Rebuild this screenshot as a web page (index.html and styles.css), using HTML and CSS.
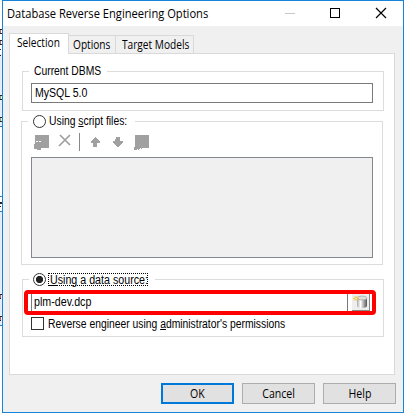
FILE: index.html
```html
<!DOCTYPE html>
<html lang="en">
<head>
<meta charset="utf-8">
<title>Database Reverse Engineering Options</title>
<link rel="stylesheet" href="styles.css">
</head>
<body>
<div class="desktop">
<svg class="behind" width="2" height="415" shape-rendering="crispEdges"><path d="M0 54h2v72H0zM0 211h2v114H0z" fill="#e3eefa"/><path d="M0 126h2v1H0zM0 196h2v1H0zM0 211h2v1H0zM0 325h2v1H0z" fill="#1883d7"/><path d="M0 29h2v1H0zM0 33h2v1H0zM0 40h2v1H0zM0 44h2v1H0zM0 49h1v1H0zM0 55h1v1H0zM0 95h2v1H0zM0 99h2v1H0zM0 117h2v1H0zM0 121h2v1H0zM0 202h2v2H0zM0 206h1v1H0zM0 294h2v1H0zM0 298h1v1H0zM0 316h2v1H0zM0 320h1v1H0z" fill="#223"/><path d="M0 30h1v3H0zM0 41h1v3H0zM0 295h1v3H0zM0 317h1v3H0z" fill="#b96a5a"/><path d="M0 96h1v3H0zM0 118h1v3H0z" fill="#7cae62"/></svg>
<main class="window">
  <header class="titlebar">
    <h1>Database Reverse Engineering Options</h1>
    <svg class="controls" width="104" height="12" shape-rendering="crispEdges"><path d="M0 6.500h10" stroke="#c8c8c8"/><path d="M45.500 1.500h9v9h-9z" fill="none" stroke="#000"/><path d="M91 1l10 10M101 1L91 11" stroke="#000" shape-rendering="auto" stroke-width="1.200"/></svg>
  </header>
  <nav class="tabs">
    <span class="tab active"><b class="t-sel">Selection</b></span>
    <span class="tab opt"><b class="t-opt">Options</b></span>
    <span class="tab target"><b class="t-tar">Target Models</b></span>
  </nav>
  <section class="panel">
    <fieldset class="group dbms">
      <div class="legend"><b class="t-cur">Current DBMS</b></div>
      <div class="field"><b class="t-my">MySQL 5.0</b></div>
    </fieldset>
    <fieldset class="group scripts">
      <div class="legend"><span class="radio"></span><b class="t-usf">Using <u>s</u>cript files:</b></div>
      <div class="toolbar">
        <svg width="118" height="18" fill="#a0a0a0" shape-rendering="crispEdges"><path d="M1 2h14v13H7v2H3v-1H0v-5h1z"/><path d="M2 8h2v1H2zM5 8h2v1H5z" fill="#fff"/><path d="M26 2l10 10M36 2L25 13" stroke="#a0a0a0" stroke-width="1.700" shape-rendering="auto"/><path d="M45 0h1v18h-1z" fill="#888"/><path d="M61 4h1v1h1v1h1v1h1v1h1v2h-3v4h-4v-4h-2V8h1V7h1V6h1V5h1zM82 4h4v4h3v2h-1v1h-1v1h-1v1h-1v1h-2v-1h-1v-1h-1v-1h-1v-1h-1V8h2zM101 2h14v13h-7v1h-1v-1h-1v1h-1v1h-1v-1h-1v1h-3v-3h1z"/></svg>
      </div>
      <div class="list"></div>
    </fieldset>
    <fieldset class="group source">
      <div class="legend"><span class="radio on"></span><span class="focus"><b class="t-uds"><u>U</u>sing a data source:</b></span></div>
      <div class="picker">
        <div class="path"><b class="t-plm">plm-dev.dcp</b></div>
        <div class="dbbtn"><svg width="17" height="16"><defs><linearGradient id="g"><stop stop-color="#aaa"/><stop offset=".35" stop-color="#fff"/><stop offset="1" stop-color="#555"/></linearGradient></defs><path d="M5 4v8c0 2.500 10 2.500 10 0V4" fill="url(#g)"/><ellipse cx="10" cy="4" rx="5" ry="2" fill="#ddd" stroke="#999" stroke-width=".6"/><path d="M1 4.500h6M4 2v5M2 2.500l4 4M6 2.500l-4 4" stroke="#edc74a"/><path d="M3.500 4h1v1h-1z" fill="#fff"/></svg></div>
      </div>
      <label class="check"><span class="box"></span><b class="t-rev">Reverse engineer using <u>a</u>dministrator's permissions</b></label>
    </fieldset>
  </section>
  <footer class="actions">
    <button class="ok"><b class="t-ok">OK</b></button>
    <button><b class="t-can">Cancel</b></button>
    <button><b class="t-help">Help</b></button>
  </footer>
</main>
</div>
</body>
</html>
```
FILE: styles.css
```css
* { box-sizing: border-box; }
body { margin: 0; background: #fff; font: 12px/14px "Open Sans", "Noto Sans", sans-serif; color: #000; overflow: hidden; }
b, h1 { display: inline-block; font-weight: 400; white-space: nowrap; margin: 0; transform-origin: 0 50%; }
.desktop { display: flex; width: 406px; height: 415px; }
.behind { flex: none; }
.window { flex: none; width: 402px; height: 413px; border: 1px solid #1883d7; background: #f0f0f0; }
.titlebar { height: 25px; background: #fff; display: flex; justify-content: space-between; padding: 6px 14px 0 4px; }
h1 { font-size: 12px; line-height: 14px; width: 220px; transform: scaleX(.928); }
.controls { flex: none; }
.tabs { height: 27px; padding: 7px 0 0 6px; display: flex; align-items: flex-end; }
.tab { height: 18px; border: 1px solid #d9d9d9; border-bottom: 0; padding: 2px 0 0 4px; }
.tab.active { position: relative; height: 21px; width: 60px; margin-bottom: -1px; padding: 2px 0 0 7px; background: #fff; }
.opt { width: 47px; border-left: 0; }
.target { width: 78px; border-left: 0; padding-left: 6px; }
.panel { margin-left: 6px; width: 386px; height: 322px; border: 1px solid #d9d9d9; background: #fff; padding: 17px 0 0 12px; }
.group { margin: 0; border: 1px solid #dcdcdc; padding: 0 0 0 8px; min-width: 0; width: 362px; }
.group b { font-family: "Liberation Sans", sans-serif; }
.dbms { height: 40px; }
.legend { height: 14px; margin-top: -8px; margin-left: -2px; background: #fff; display: flex; align-items: center; }
.dbms .legend { width: 78px; padding-left: 5px; }
.field { width: 342px; height: 20px; border: 1px solid #7a7a7a; margin-top: 5px; padding: 2px 3px; }
.scripts { height: 144px; margin: 10px 0 0 -1px; padding-left: 9px; }
.scripts .legend { width: 107px; padding-left: 5px; margin-left: -3px; }
.radio { width: 13px; height: 13px; border: 1px solid #333; border-radius: 50%; margin-right: 3px; flex: none; }
.on { background: radial-gradient(circle, #222 0 3.200px, #fff 4px); margin-right: 2px; }
.toolbar { height: 18px; margin: 5px 0 0 3px; }
.list { width: 342px; height: 101px; background: #f0f0f0; border: 1px solid #828790; margin-top: 6px; }
.source { height: 58px; margin-top: 14px; }
.source .legend { width: 126px; padding-left: 4px; }
.focus { border: 1px dotted #000; width: 100px; height: 13px; line-height: 12px; flex: none; }
.focus b { display: block; line-height: 12px; margin-left: 1px; }
.picker { width: 352px; height: 25px; margin: 4px 0 0 -7px; border: 4px solid #f00; border-radius: 4px; display: flex; padding-left: 3px; }
.path { width: 317px; height: 17px; border: 1px solid #7a7a7a; border-width: 0 1px; padding: 1px 2px; }
.dbbtn { width: 18px; height: 17px; margin-left: 4px; background: #eee; border: 1px solid #888; border-width: 0 1px 1px 0; }
.dbbtn svg, .toolbar svg { display: block; }
.check { display: flex; align-items: center; height: 13px; margin-top: 2px; }
.box { width: 13px; height: 13px; border: 1px solid #333; margin-right: 4px; flex: none; }
.actions { display: flex; gap: 8px; padding: 8px 0 0 158px; }
button { width: 73px; height: 21px; border: 1px solid #adadad; background: #e1e1e1; padding: 0; font: inherit; color: #000; }
button b { transform-origin: 50% 50%; transform: scaleX(.88); }
.ok { border: 2px solid #0078d7; }
.t-sel, .t-opt, .t-tar { transform: scaleX(.845); }
.t-cur, .t-usf, .t-rev { transform: scaleX(.862); }
.t-my { transform: scaleX(.88); }
.t-uds, .t-plm { transform: scaleX(.89); }
```
